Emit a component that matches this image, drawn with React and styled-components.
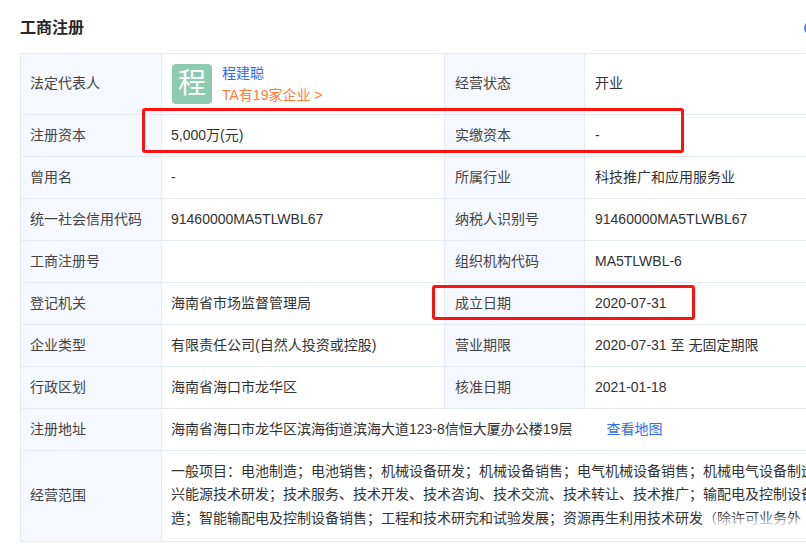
import React from "react";
import styled, { createGlobalStyle } from "styled-components";

const GlobalStyle = createGlobalStyle`
  html, body {
    margin: 0;
    padding: 0;
    background: #fff;
    overflow: hidden;
  }
  body {
    font-family: "Liberation Sans", "Noto Sans CJK SC", sans-serif;
    font-size: 14px;
    color: #333;
  }
`;

const Page = styled.div`
  position: relative;
  width: 806px;
  height: 553px;
  overflow: hidden;
  padding: 18px 0 0 20px;
  box-sizing: border-box;
`;

const Header = styled.div`
  display: flex;
  align-items: center;
  justify-content: space-between;
  width: 798px;
  margin-bottom: 15px;
`;

const Title = styled.h2`
  margin: 0;
  font-size: 16px;
  line-height: 20px;
  font-weight: 700;
  color: #282828;
`;

const HelpIcon = styled.span`
  flex: none;
  width: 14px;
  height: 14px;
  box-sizing: border-box;
  border: 2px solid #4a8fe8;
  border-radius: 50%;
`;

const Table = styled.table`
  width: 842px;
  table-layout: fixed;
  border-collapse: collapse;
  border: 1px solid #e4ebf5;
`;

const LabelCell = styled.td`
  height: ${({ $h }) => $h || 41}px;
  padding: 0 10px 2px ${({ $pl }) => $pl || 9}px;
  box-sizing: border-box;
  background: #f5f8fe;
  border: 1px solid #e4ebf5;
  color: #444;
  line-height: 20px;
`;

const ValueCell = styled.td`
  padding: 0 10px 2px ${({ $pl }) => $pl || 9}px;
  border: 1px solid #e4ebf5;
  color: #333;
  line-height: 20px;
`;

const ScopeCell = styled(ValueCell)`
  position: relative;
  line-height: 23.5px;
`;

const Fade = styled.div`
  position: absolute;
  right: 0;
  bottom: 9px;
  width: 150px;
  height: 24px;
  background: linear-gradient(to bottom, rgba(255, 255, 255, 0) 25%, rgba(255, 255, 255, 0.9) 75%);
`;

const Person = styled.div`
  display: flex;
  align-items: center;
  gap: 10px;
  margin: 2px 0 0 1px;
`;

const Avatar = styled.div`
  width: 40px;
  height: 40px;
  border-radius: 4px;
  background: #8ccbb0;
  color: #fff;
  font-size: 28px;
  line-height: 40px;
  text-align: center;
`;

const PersonInfo = styled.div`
  display: flex;
  flex-direction: column;
  gap: 2px;
`;

const Link = styled.a`
  color: ${({ $orange }) => ($orange ? "#fb7c3c" : "#2f6bf0")};
  margin-left: ${({ $gap }) => $gap || 0}px;
`;

const Highlight = styled.div`
  position: absolute;
  left: ${({ $x }) => $x}px;
  top: ${({ $y }) => $y}px;
  width: ${({ $w }) => $w}px;
  height: ${({ $h }) => $h}px;
  box-sizing: border-box;
  border: 3px solid #fa1410;
  border-radius: 3px;
`;

const rows = [
  ["曾用名", "-", "所属行业", "科技推广和应用服务业"],
  ["统一社会信用代码", "91460000MA5TLWBL67", "纳税人识别号", "91460000MA5TLWBL67"],
  ["工商注册号", "", "组织机构代码", "MA5TLWBL-6"],
  ["登记机关", "海南省市场监督管理局", "成立日期", "2020-07-31"],
  ["企业类型", "有限责任公司(自然人投资或控股)", "营业期限", "2020-07-31 至 无固定期限"],
  ["行政区划", "海南省海口市龙华区", "核准日期", "2021-01-18"],
];

const scope =
  "一般项目：电池制造；电池销售；机械设备研发；机械设备销售；电气机械设备销售；机械电气设备制造；新兴能源技术研发；技术服务、技术开发、技术咨询、技术交流、技术转让、技术推广；输配电及控制设备制造；智能输配电及控制设备销售；工程和技术研究和试验发展；资源再生利用技术研发（除许可业务外";

export default function App() {
  return (
    <>
      <GlobalStyle />
      <Page>
        <Header>
          <Title>工商注册</Title>
          <HelpIcon />
        </Header>
        <Table>
          <colgroup>
            <col style={{ width: 141 }} />
            <col style={{ width: 283 }} />
            <col style={{ width: 140 }} />
            <col />
          </colgroup>
          <tbody>
            <tr>
              <LabelCell $h={61}>法定代表人</LabelCell>
              <ValueCell>
                <Person>
                  <Avatar>程</Avatar>
                  <PersonInfo>
                    <Link>程建聪</Link>
                    <Link $orange>TA有19家企业 &gt;</Link>
                  </PersonInfo>
                </Person>
              </ValueCell>
              <LabelCell $pl={10}>经营状态</LabelCell>
              <ValueCell $pl={10}>开业</ValueCell>
            </tr>
            <tr>
              <LabelCell $h={42}>注册资本</LabelCell>
              <ValueCell>5,000万(元)</ValueCell>
              <LabelCell $pl={10}>实缴资本</LabelCell>
              <ValueCell $pl={10}>-</ValueCell>
            </tr>
            {rows.map((row) => (
              <tr key={row[0]}>
                <LabelCell $h={42}>{row[0]}</LabelCell>
                <ValueCell>{row[1]}</ValueCell>
                <LabelCell $pl={10}>{row[2]}</LabelCell>
                <ValueCell $pl={10}>{row[3]}</ValueCell>
              </tr>
            ))}
            <tr>
              <LabelCell $h={42}>注册地址</LabelCell>
              <ValueCell colSpan={3}>
                海南省海口市龙华区滨海街道滨海大道123-8信恒大厦办公楼19层
                <Link $gap={34}>查看地图</Link>
              </ValueCell>
            </tr>
            <tr>
              <LabelCell $h={91}>经营范围</LabelCell>
              <ScopeCell colSpan={3}>
                {scope}
                <Fade />
              </ScopeCell>
            </tr>
          </tbody>
        </Table>
        <Highlight $x={142} $y={108} $w={542} $h={45} />
        <Highlight $x={432} $y={285} $w={263} $h={35} />
      </Page>
    </>
  );
}
